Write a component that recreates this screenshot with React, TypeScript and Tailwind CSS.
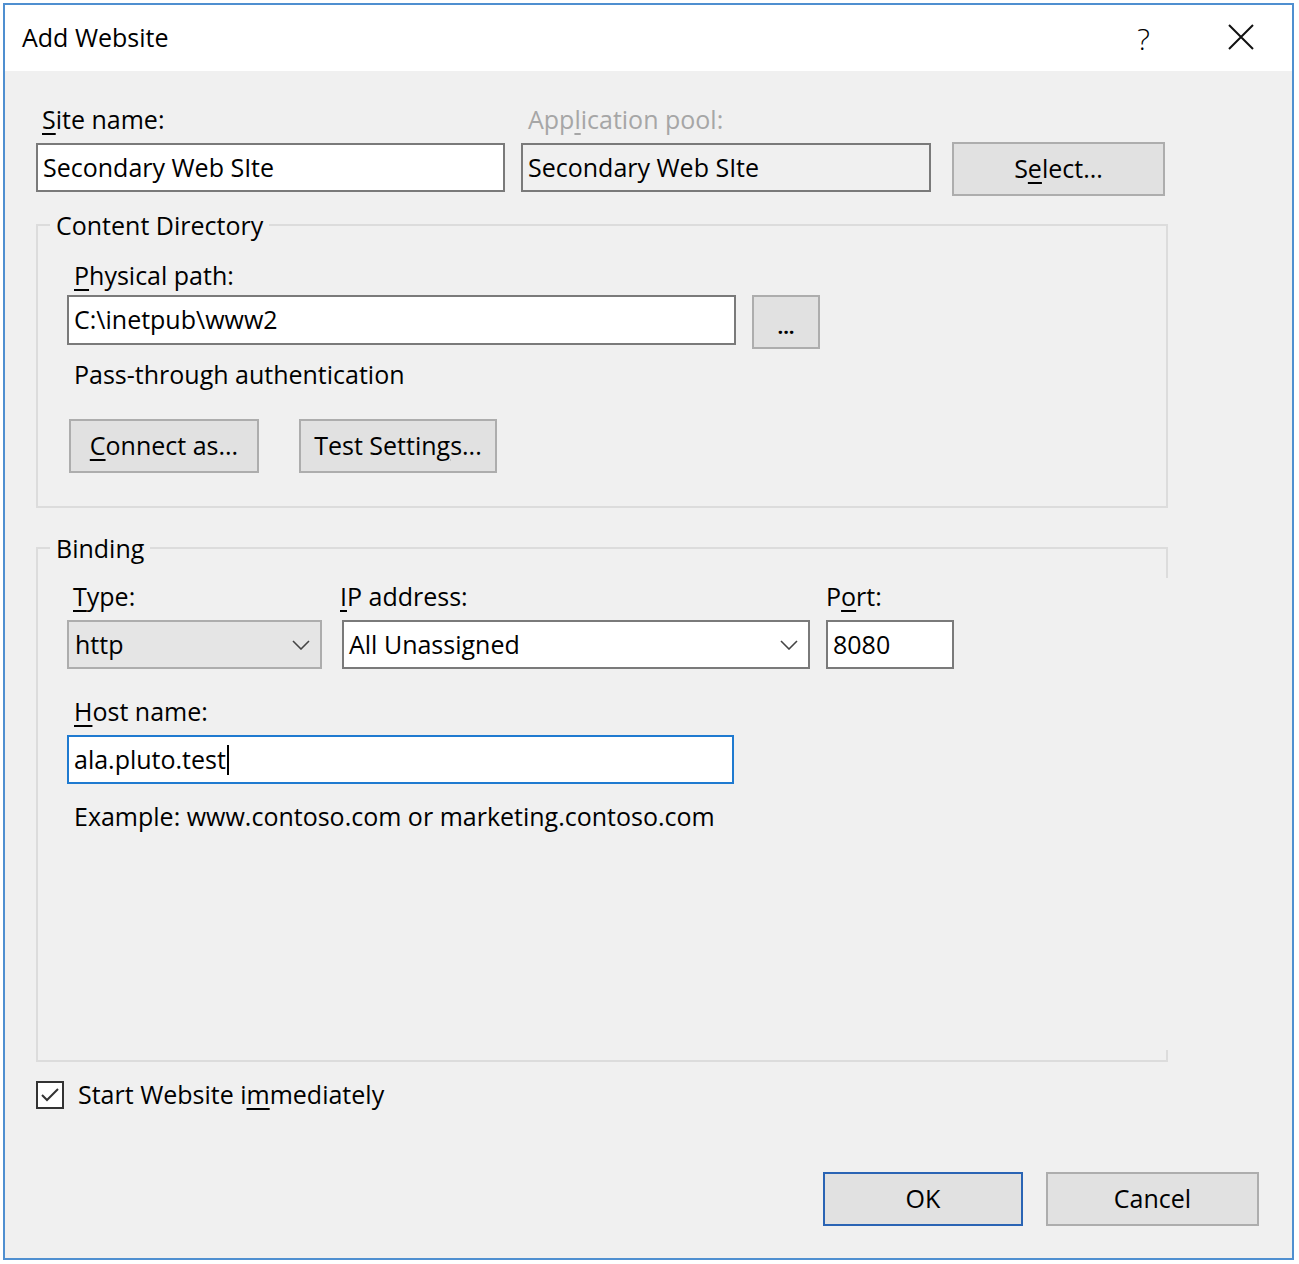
import React from "react";

const font = { fontFamily: '"Open Sans", "Noto Sans", "Liberation Sans", sans-serif' };

function Chevron() {
  return (
    <svg width="18" height="10" viewBox="0 0 18 10" className="shrink-0">
      <polyline points="1,1 9,9 17,1" fill="none" stroke="#444" strokeWidth="1.6" />
    </svg>
  );
}

function Label({
  children,
  className = "",
  muted = false,
}: {
  children: React.ReactNode;
  className?: string;
  muted?: boolean;
}) {
  return (
    <div className={`h-[30px] text-[25px] leading-[30px] ${muted ? "text-[#a6a6a6]" : "text-black"} ${className}`}>
      {children}
    </div>
  );
}

function Btn({
  children,
  className = "",
  primary = false,
}: {
  children: React.ReactNode;
  className?: string;
  primary?: boolean;
}) {
  return (
    <div
      className={`flex h-[54px] items-center justify-center border-2 bg-[#e1e1e1] text-[25px] text-black ${
        primary ? "border-[#2a64b4]" : "border-[#adadad]"
      } ${className}`}
    >
      {children}
    </div>
  );
}

function Field({ value, className = "", muted = false }: { value: React.ReactNode; className?: string; muted?: boolean }) {
  return (
    <div
      className={`flex h-[49px] items-center border-2 border-[#7a7a7a] px-[5px] text-[25px] text-black ${
        muted ? "bg-[#f0f0f0]" : "bg-white"
      } ${className}`}
    >
      {value}
    </div>
  );
}

export default function App() {
  return (
    <div className="h-[1264px] w-[1299px] bg-white pl-[3px] pt-[3px]" style={font}>
      <div className="flex h-[1257px] w-[1291px] flex-col border-2 border-[#4f8fd0] bg-[#f0f0f0]">
        {/* title bar */}
        <div className="flex h-[66px] items-center bg-white pl-[17px] pr-[38px]">
          <span className="text-[25px] text-black">Add Website</span>
          <span className="ml-auto mr-[78px] text-[30px] font-light text-black">?</span>
          <svg width="26" height="26" viewBox="0 0 26 26" className="-mt-[3px]">
            <path d="M1 1 L25 25 M25 1 L1 25" stroke="#111" strokeWidth="2" fill="none" />
          </svg>
        </div>

        <div className="flex flex-1 flex-col pl-[31px] pr-[33px]">
          {/* site name row */}
          <div className="mt-[33px] flex items-start">
            <div className="flex w-[469px] flex-col">
              <Label className="ml-[6px]">
                <u className="underline-offset-4">S</u>ite name:
              </Label>
              <Field className="mt-[9px]" value="Secondary Web SIte" />
            </div>
            <div className="ml-[16px] flex w-[410px] flex-col">
              <Label className="ml-[7px]" muted>
                App<u className="underline-offset-4">l</u>ication pool:
              </Label>
              <Field className="mt-[9px]" muted value="Secondary Web SIte" />
            </div>
            <Btn className="ml-[21px] mt-[38px] w-[213px]">
              <span>
                S<u className="underline-offset-4">e</u>lect...
              </span>
            </Btn>
          </div>

          {/* content directory */}
          <fieldset className="mt-[14px] w-[1132px] border-2 border-[#dcdcdc] pb-[33px] pl-[29px]">
            <legend className="-ml-[17px] h-[30px] px-[6px] text-[25px] leading-[30px] text-black">Content Directory</legend>
            <Label className="ml-[7px] mt-[20px]">
              <u className="underline-offset-4">P</u>hysical path:
            </Label>
            <div className="mt-[5px] flex items-start">
              <Field className="h-[50px] w-[669px]" value="C:\inetpub\www2" />
              <Btn className="ml-[16px] w-[68px] items-end pb-[10px] leading-none">
                <span className="text-[20px] font-bold">...</span>
              </Btn>
            </div>
            <Label className="ml-[7px] mt-[10px]">Pass-through authentication</Label>
            <div className="ml-[2px] mt-[30px] flex gap-[40px]">
              <Btn className="w-[190px]">
                <span>
                  <u className="underline-offset-4">C</u>onnect as...
                </span>
              </Btn>
              <Btn className="w-[198px]">
                <span>
                  Test Settin<u className="underline-offset-4">g</u>s...
                </span>
              </Btn>
            </div>
          </fieldset>

          {/* binding */}
          <div className="relative mt-[25px] w-[1132px]">
            <fieldset className="h-[529px] border-2 border-r-0 border-[#dcdcdc] pl-[29px]">
              <legend className="-ml-[17px] h-[30px] px-[6px] text-[25px] leading-[30px] text-black">Binding</legend>
              <div className="mt-[18px] flex items-start">
                <div className="flex w-[255px] flex-col">
                  <Label className="ml-[6px]">
                    <u className="underline-offset-4">T</u>ype:
                  </Label>
                  <div className="mt-[9px] flex h-[49px] items-center border-2 border-[#adadad] bg-[#e5e5e5] pl-[6px] pr-[10px] text-[25px]">
                    http
                    <span className="ml-auto">
                      <Chevron />
                    </span>
                  </div>
                </div>
                <div className="ml-[20px] flex w-[468px] flex-col">
                  <Label className="-ml-[2px]">
                    <u className="underline-offset-4">I</u>P address:
                  </Label>
                  <div className="mt-[9px] flex h-[49px] items-center border-2 border-[#7a7a7a] bg-white pl-[5px] pr-[10px] text-[25px]">
                    All Unassigned
                    <span className="ml-auto">
                      <Chevron />
                    </span>
                  </div>
                </div>
                <div className="ml-[16px] flex w-[128px] flex-col">
                  <Label>
                    P<u className="underline-offset-4">o</u>rt:
                  </Label>
                  <Field className="mt-[9px]" value="8080" />
                </div>
              </div>
              <Label className="ml-[7px] mt-[27px]">
                <u className="underline-offset-4">H</u>ost name:
              </Label>
              <div className="mt-[9px] flex h-[49px] w-[667px] items-center border-2 border-[#1f7ad0] bg-white px-[5px] text-[25px]">
                ala.pluto.test
                <span className="ml-[1px] h-[30px] w-[2px] bg-black" />
              </div>
              <Label className="ml-[7px] mt-[17px]">Example: www.contoso.com or marketing.contoso.com</Label>
            </fieldset>
            {/* right edge of the group box only shows at the corners */}
            <div className="absolute right-0 top-[15px] h-[30px] w-[2px] bg-[#dcdcdc]" />
            <div className="absolute bottom-0 right-0 h-[12px] w-[2px] bg-[#dcdcdc]" />
          </div>

          {/* start checkbox */}
          <div className="mt-[14px] flex items-center">
            <div className="flex h-[28px] w-[28px] items-center justify-center border-2 border-[#333] bg-white">
              <svg width="20" height="16" viewBox="0 0 20 16">
                <polyline points="2,8 7,13 18,2" fill="none" stroke="#333" strokeWidth="2" />
              </svg>
            </div>
            <span className="ml-[14px] text-[25px] text-black">
              Start Website i<u className="underline-offset-4">m</u>mediately
            </span>
          </div>

          {/* dialog buttons */}
          <div className="mb-[32px] mt-auto flex justify-end gap-[23px]">
            <Btn className="w-[200px]" primary>
              OK
            </Btn>
            <Btn className="w-[213px]">Cancel</Btn>
          </div>
        </div>
      </div>
    </div>
  );
}
